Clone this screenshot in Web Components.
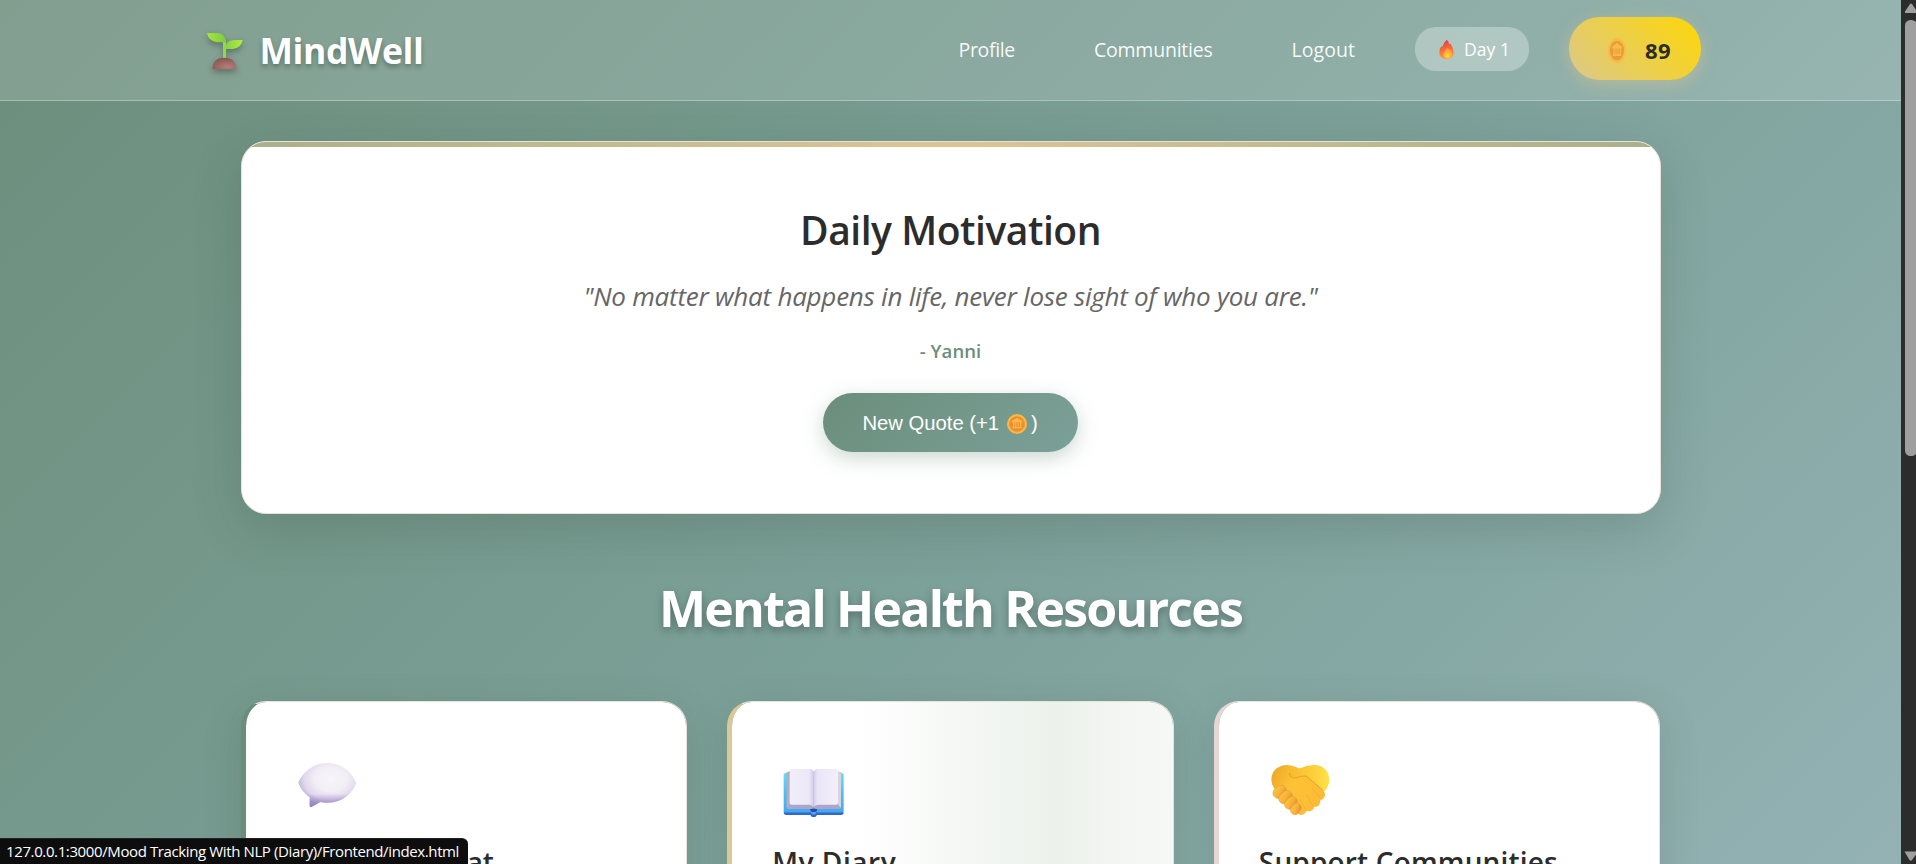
<!DOCTYPE html>
<html lang="en">
<head>
<meta charset="utf-8">
<title>MindWell</title>
<style>
html,body{margin:0;height:100%;overflow:hidden}
body{font-family:"Open Sans","Noto Sans",sans-serif;color:#2c2c2c}
</style>
</head>
<body>
<mw-shell>
  <mw-header slot="header">
    <mw-logo slot="brand"></mw-logo>
    <mw-nav-link><mw-label measure="56.5">Profile</mw-label></mw-nav-link>
    <mw-nav-link><mw-label measure="118.5">Communities</mw-label></mw-nav-link>
    <mw-nav-link><mw-label measure="63.5">Logout</mw-label></mw-nav-link>
    <mw-streak><mw-label measure="46">Day 1</mw-label></mw-streak>
    <mw-coins><mw-label measure="26">89</mw-label></mw-coins>
  </mw-header>
  <mw-quote>
    <mw-label slot="title" measure="301">Daily Motivation</mw-label>
    <mw-label slot="text" measure="734">"No matter what happens in life, never lose sight of who you are."</mw-label>
    <mw-label slot="author" measure="61.5">- Yanni</mw-label>
  </mw-quote>
  <mw-section-title><mw-label measure="583">Mental Health Resources</mw-label></mw-section-title>
  <mw-card-row>
    <mw-card icon="bubble" style="--edge:#6b8e7a"><mw-label measure="208">AI Support Chat</mw-label></mw-card>
    <mw-card icon="book" style="--edge:#dcc894;--fill:linear-gradient(90deg,#fff 28%,#f6f8f6 50%,#ebf1eb 74%,#f3f5f2 86%,#f6f8f5)"><mw-label measure="124">My Diary</mw-label></mw-card>
    <mw-card icon="hands" style="--edge:#e8d5d5"><mw-label measure="299">Support Communities</mw-label></mw-card>
  </mw-card-row>
  <mw-scrollbar slot="scroll"></mw-scrollbar>
  <mw-status slot="status"><mw-label measure="453">127.0.0.1:3000/Mood Tracking With NLP (Diary)/Frontend/index.html</mw-label></mw-status>
</mw-shell>
<script>
const define = (name, html, after) => {
  const t = document.createElement('template');
  t.innerHTML = html;
  customElements.define(name, class extends HTMLElement {
    connectedCallback() {
      if (this.shadowRoot) return;
      this.attachShadow({mode:'open'}).append(t.content.cloneNode(true));
      if (after) after(this);
    }
  });
};

const coin = (w,h) => `<svg width="${w}" height="${h}" viewBox="0 0 60 60" preserveAspectRatio="none">
<circle cx="30" cy="30" r="30" fill="#fdb93f"/><circle cx="30" cy="30" r="23.5" fill="#e88f3c"/>
<path d="M30 12 46 21v4H14v-4zM18 25h4v14h-4zM25 25h3v14h-3zM32 25h3v14h-3zM39 25h4v14h-4zM16 39h28v4H16z" fill="#fdb93f"/></svg>`;

const icons = {
bubble:`<svg viewBox="857 210 240 240"><defs>
<radialGradient id="a" cx=".56" cy=".36" r=".62"><stop offset="0" stop-color="#f8f6f9"/><stop offset=".45" stop-color="#f2eef6"/><stop offset=".75" stop-color="#e2d8ec"/><stop offset="1" stop-color="#b5a5d3"/></radialGradient>
<linearGradient id="b" x1="0" y1="0" x2="0" y2="1"><stop offset=".7" stop-color="#8c78c0" stop-opacity="0"/><stop offset="1" stop-color="#8c78c0" stop-opacity=".85"/></linearGradient></defs>
<path d="M894 308C903 287 929 249 981 249C1033 249 1060 288 1068 309C1059 333 1034 368 981 368Q967 368 960 366L933 381Q928 382 928 377V352C910 338 900 325 894 308Z" fill="url(#a)"/>
<path d="M894 308C903 287 929 249 981 249C1033 249 1060 288 1068 309C1059 333 1034 368 981 368Q967 368 960 366L933 381Q928 382 928 377V352C910 338 900 325 894 308Z" fill="url(#b)"/></svg>`,
book:`<svg viewBox="217 210 240 240"><defs>
<linearGradient id="a" x1="0" y1="0" x2="0" y2="1"><stop offset="0" stop-color="#5ce0ff"/><stop offset=".5" stop-color="#4fbcf5"/><stop offset=".93" stop-color="#3fabf2"/><stop offset=".95" stop-color="#3566cc"/></linearGradient>
<linearGradient id="l"><stop offset="0" stop-color="#f1edf9"/><stop offset=".8" stop-color="#ede8f7"/><stop offset="1" stop-color="#d4cbe8"/></linearGradient>
<linearGradient id="r"><stop offset="0" stop-color="#d4cbe8"/><stop offset=".15" stop-color="#eae5f6"/><stop offset="1" stop-color="#f3effa"/></linearGradient></defs>
<rect x="252" y="278" width="180" height="127" rx="8" fill="url(#a)"/>
<circle cx="342" cy="401" r="10" fill="#3563c9"/><circle cx="342" cy="396" r="8" fill="#48a5ef"/><path d="M331 386h22q-1 10-11 10t-11-10z" fill="#2c4b9d"/>
<path d="M261 281Q261 275 268 275H416Q424 275 424 281V382Q424 387 418 387H348L342 382 336 387H266Q261 387 261 382Z" fill="#afa5cb"/>
<path d="M261 281Q264 275 270 273V374L261 383Z" fill="#b3b0bd"/><path d="M415 273Q422 275 424 281V383L415 374Z" fill="#d8d5df"/>
<path d="M270 272Q270 267 276 267H333Q340 267 342 275V382Q338 374 329 374H276Q270 374 270 369Z" fill="url(#l)"/>
<path d="M342 275Q344 267 351 267H408Q415 267 415 272V369Q415 374 409 374H355Q346 374 342 382Z" fill="url(#r)"/></svg>`,
hands:`<svg viewBox="176 210 240 240"><defs>
<linearGradient id="a" x1="0" y1=".3" x2="1" y2=".7"><stop offset="0" stop-color="#eeab2a"/><stop offset=".35" stop-color="#fdc335"/><stop offset="1" stop-color="#fcba34"/></linearGradient>
<linearGradient id="c" x1="0" y1="0" x2="1" y2="0"><stop offset="0" stop-color="#f8b92f"/><stop offset=".6" stop-color="#fdcf3a"/><stop offset="1" stop-color="#ffe347"/></linearGradient>
<linearGradient id="f" x1="0" y1="0" x2=".4" y2="1"><stop offset="0" stop-color="#fcc63a"/><stop offset=".6" stop-color="#f8b438"/><stop offset="1" stop-color="#e9933f"/></linearGradient></defs>
<path d="M213 298C214 271 235 255 260 255Q277 256 289 262L330 284 368 331Q379 345 370 355 363 361 360 359C361 373 352 383 341 380 341 390 329 397 319 392 312 406 300 408 294 401L226 330Q213 316 213 298Z" fill="url(#a)"/>
<path d="M266 279Q267 268 279 267 291 267 302 264 325 253 347 255C371 258 387 275 387 300Q386 319 373 334L318 288Q305 288 295 292 285 297 274 292 266 288 266 279Z" fill="url(#c)"/>
<path d="M266 279Q267 291 279 294 290 295 301 289L317 288 371 333" fill="none" stroke="#cd851d" stroke-width="2.500" opacity=".6"/>
<path d="M318 343Q331 365 338 379M298 358Q311 378 317 391M338 329Q352 343 362 358" fill="none" stroke="#e79a32" stroke-width="3" opacity=".4"/>
<g fill="url(#f)" stroke="#dd962c" stroke-width="1.2"><rect x="217" y="319" width="43" height="33" rx="16" transform="rotate(-39 239 336)"/><rect x="234" y="336" width="44" height="31" rx="15" transform="rotate(-41 256 352)"/><rect x="251" y="354" width="42" height="29" rx="14" transform="rotate(-44 272 369)"/><rect x="269" y="373" width="36" height="27" rx="13" transform="rotate(-55 287 387)"/></g></svg>`
};

/* One line of text, tracked so that it fills the width named in "measure". */
define('mw-label', `<style>:host{display:block;white-space:nowrap}span{display:inline-block}</style><span><slot></slot></span>`, el => {
  const s = el.shadowRoot.querySelector('span'), m = +el.getAttribute('measure');
  const fit = () => {
    s.style.letterSpacing = '0px';
    s.style.letterSpacing = (m - s.getBoundingClientRect().width) / el.textContent.length + 'px';
  };
  el.style.width = m + 'px';
  fit();
  addEventListener('load', fit);
});

define('mw-shell', `<style>
:host{display:grid;grid-template-columns:minmax(0,1fr) 15px;height:100vh;overflow:hidden;position:relative}
.page{overflow:hidden;background:linear-gradient(135deg,#6c8e7c 0%,#7ca199 55%,#94b2b4 100%)}
main{width:1420px;margin:40px auto 0}
.status{position:absolute;left:0;bottom:0}
</style><div class="page"><slot name="header"></slot><main><slot></slot></main></div><slot name="scroll"></slot><div class="status"><slot name="status"></slot></div>`);

define('mw-header', `<style>
:host{display:block;height:100px;background:rgba(255,255,255,.15);border-bottom:1px solid rgba(255,255,255,.3)}
.in{width:1500px;height:97px;margin:0 auto;display:flex;align-items:center;justify-content:space-between}
nav{display:flex;align-items:center;gap:40px}
</style><div class="in"><slot name="brand"></slot><nav><slot></slot></nav></div>`);

define('mw-logo', `<style>
:host{display:flex;align-items:center;gap:10px;padding-top:3px;font-size:35.5px;font-weight:700;color:#fff;text-shadow:0 3px 5px rgba(0,0,0,.3);line-height:50px}
svg{display:block;margin-left:-1px;filter:drop-shadow(0 3px 3px rgba(0,0,0,.3))}
</style><svg width="50" height="50" viewBox="31 75 150 150"><defs>
<linearGradient id="g"><stop offset="0" stop-color="#a6e53c"/><stop offset="1" stop-color="#7cc943"/></linearGradient>
<linearGradient id="h"><stop offset="0" stop-color="#86d045"/><stop offset="1" stop-color="#b0ec3d"/></linearGradient>
<radialGradient id="d" cx=".65" cy=".8" r=".8"><stop offset="0" stop-color="#b77f7b"/><stop offset="1" stop-color="#8a544f"/></radialGradient></defs>
<path d="M100 122h9v55h-9z" fill="#93d84a"/>
<path d="M52 99H82Q109 101 109 127H82Q57 124 52 99Z" fill="url(#g)"/><path d="M159 120H133Q106 122 106 147H129Q156 143 159 120Z" fill="url(#h)"/>
<path d="M68 207Q70 173 104 173T140 207Q104 209 68 207Z" fill="url(#d)"/></svg><mw-label measure="164">MindWell</mw-label>`);

define('mw-nav-link', `<style>:host{display:block;padding:2px 20px 0 19px;font-size:19.5px;line-height:30px;font-weight:500;color:rgba(255,255,255,.95)}
:host(:nth-of-type(3)){padding-right:20px}</style><slot></slot>`);

define('mw-streak', `<style>
:host{display:flex;align-items:center;box-sizing:border-box;width:114px;height:44px;padding-left:24px;gap:10px;border-radius:21px;background:rgba(255,255,255,.3);color:#fff;font-size:17.5px;line-height:44px}
svg{display:block;margin-top:2px}</style>
<svg width="15" height="19" viewBox="0 0 44 56"><defs><linearGradient id="a" x1=".4" y1="0" x2=".6" y2="1"><stop offset="0" stop-color="#e93b42"/><stop offset=".55" stop-color="#f8733c"/><stop offset="1" stop-color="#fba33e"/></linearGradient><radialGradient id="b" cx=".5" cy=".8" r=".7"><stop offset="0" stop-color="#ffd83a"/><stop offset="1" stop-color="#fc9538"/></radialGradient></defs>
<path d="M22 0Q29 1 29 12 34 9 35 13 43 23 43 36C43 48 34 56 22 56S1 48 1 36Q1 25 6 20 9 18 10 20 13 8 22 0Z" fill="url(#a)"/><path d="M25 23Q31 31 34 28 38 33 38 41 35 54 24 54 13 54 12 43 13 33 25 23Z" fill="url(#b)"/></svg><slot></slot>`);

define('mw-coins', `<style>
:host{display:flex;align-items:center;box-sizing:border-box;width:131.5px;height:63px;padding-left:39px;gap:19px;border-radius:31px;background:linear-gradient(45deg,#dcc88c,#fcd60c 95%);box-shadow:0 4px 15px rgba(220,200,140,.5);color:#2c2c2c;font-size:22px;font-weight:700;line-height:30px}
svg{display:block;margin-top:4px;opacity:.8}mw-label,slot{display:block;margin-top:2px}</style>${coin(18,25)}<slot></slot>`);

define('mw-quote', `<style>
:host{display:flex;flex-direction:column;align-items:center;box-sizing:border-box;height:373px;border:1px solid #e8e2d8;border-radius:25px;overflow:hidden;background:#fff;box-shadow:0 15px 50px rgba(44,60,44,.2);background:linear-gradient(90deg,#a9b08c,#dcc594 50%,#a9b08c) top/100% 5px no-repeat,#fff}
.t{margin-top:62px;font-size:39px;line-height:52px;font-weight:600}
.q{margin-top:18px;font-size:26px;line-height:44px;font-style:italic;color:#666}
.a{margin-top:18px;font-size:18.5px;line-height:30px;font-weight:600;color:#6b8e7b}
button{margin-top:27px;display:flex;align-items:center;box-sizing:border-box;width:255px;height:59px;padding:1px 0 0 39.5px;border:0;border-radius:29.5px;background:linear-gradient(135deg,#6b8e7b,#7ba098);box-shadow:0 6px 20px rgba(107,142,123,.35);color:#fff;font:500 20.3px "Liberation Sans",sans-serif}
svg{display:block;margin:1px 4px 0 8px}
</style><div class="t"><slot name="title"></slot></div><div class="q"><slot name="text"></slot></div><div class="a"><slot name="author"></slot></div>
<button><mw-label measure="136.5">New Quote (+1</mw-label>${coin(20,20)}<span>)</span></button>`);

define('mw-section-title', `<style>:host{display:flex;justify-content:center;margin:59px 0 58px;font-size:50px;line-height:70px;font-weight:700;color:#fff;text-shadow:0 4px 8px rgba(0,0,0,.3)}</style><slot></slot>`);

define('mw-card-row', `<style>:host{display:grid;grid-template-columns:repeat(3,1fr);gap:40px}</style><slot></slot>`);

define('mw-card', `<style>
:host{display:block;box-sizing:border-box;height:420px;padding:48px 40px 0;border:1px solid #e8e2d8;border-left:5px solid var(--edge);border-radius:25px;background:var(--fill,#fff) padding-box;box-shadow:0 10px 40px rgba(44,60,44,.16)}
svg{display:block;width:80px;height:80px}
.h{margin-top:12px;font-size:28px;line-height:40px;font-weight:600}
</style><div class="i"></div><div class="h"><slot></slot></div>`, el => { el.shadowRoot.querySelector('.i').innerHTML = icons[el.getAttribute('icon')]; });

define('mw-scrollbar', `<style>:host{display:block;background:#2c2c2c;overflow:hidden}svg{display:block}</style>
<svg width="15" height="864"><path d="M4 11.5 9 4Q10 3 11 4L16 11.5V13H5Q3.5 13 4 11.5Z" fill="#9f9f9f"/><rect x="4" y="20" width="12" height="436" rx="5.5" fill="#9f9f9f"/><path d="M3.5 851.5H16V853L11 860Q9.5 861.5 8.5 860Z" fill="#9f9f9f"/></svg>`);

define('mw-status', `<style>:host{display:block;box-sizing:border-box;width:468px;height:26px;padding-left:6px;border-radius:0 6px 0 0;border-top:1px solid #222;background:#0d0d0d;color:#fff;font-size:15px;line-height:25px}</style><slot></slot>`);
</script>
</body>
</html>
